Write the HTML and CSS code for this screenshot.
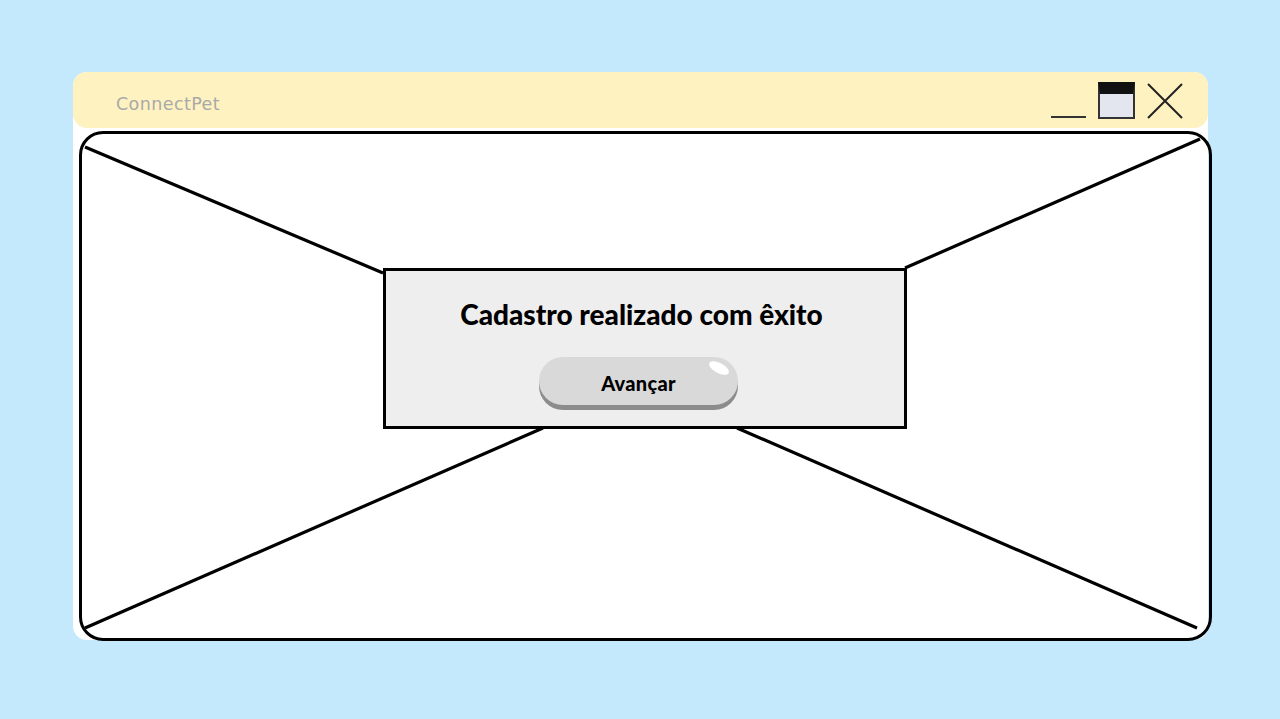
FILE: index.html
```html
<!DOCTYPE html>
<html lang="pt-BR">
<head>
    <meta charset="UTF-8">
    <meta name="viewport" content="width=device-width, initial-scale=1.0">
    <title>ConnectPet - Cadastro</title>
    <link rel="stylesheet" href="styles.css">
</head>
<body>

<div class="window">
    <div class="title-bar">
        <span class="app-name">ConnectPet</span>
        <div class="controls">
            <span class="ctrl-min"></span>
            <span class="ctrl-max"></span>
            <svg class="ctrl-close" width="36" height="36" viewBox="0 0 36 36">
                <path d="M1 1 L35 35 M35 1 L1 35" stroke="#222" stroke-width="2" fill="none"/>
            </svg>
        </div>
    </div>

    <div class="frame">
        <svg class="frame-lines" width="1127" height="504" viewBox="0 0 1127 504">
            <g stroke="#000" stroke-width="3.2" fill="none">
                <line x1="3" y1="13" x2="301" y2="139"/>
                <line x1="1118" y1="5" x2="823" y2="134"/>
                <line x1="3" y1="494" x2="461" y2="294"/>
                <line x1="1115" y1="494" x2="655" y2="294"/>
            </g>
        </svg>

        <div class="dialog">
            <h2>Cadastro realizado com êxito</h2>
            <button class="next-btn">Avançar</button>
        </div>
    </div>
</div>

</body>
</html>
```

FILE: styles.css
```css
body {
    margin: 0;
    padding: 0;
    background: #c4e8fc;
    font-family: Lato, "Open Sans", sans-serif;
    height: 719px;
    overflow: hidden;
}
.window {
    margin: 72px 0 0 73px;
    width: 1135px;
    height: 568px;
    background: white;
    border-radius: 14px;
}
.title-bar {
    height: 56px;
    background: #fef2c0;
    border-radius: 14px;
    display: flex;
    align-items: center;
    justify-content: space-between;
    padding: 0 25px 0 43px;
    box-sizing: border-box;
}
.app-name {
    margin-top: 8px;
    font-family: "DejaVu Sans", sans-serif;
    font-size: 17.5px;
    color: #a9a9a9;
    letter-spacing: 0.4px;
}
.controls {
    display: flex;
    align-items: flex-end;
    gap: 12px;
    height: 38px;
}
.ctrl-min {
    width: 35px;
    height: 2px;
    background: #333;
    margin-bottom: 1px;
}
.ctrl-max {
    width: 37px;
    height: 37px;
    box-sizing: border-box;
    border: 2px solid #333;
    border-top: 12px solid #111;
    background: #e4e6ef;
}
.ctrl-close {
    display: block;
}
.frame {
    position: relative;
    margin: 3px 0 0 6px;
    width: 1133px;
    height: 510px;
    box-sizing: border-box;
    border: 3.5px solid #000;
    border-radius: 24px;
    display: flex;
    justify-content: center;
    align-items: flex-start;
    padding-top: 133.5px;
}
.frame-lines {
    position: absolute;
    top: 0;
    left: 0;
}
.dialog {
    position: relative;
    flex-shrink: 0;
    margin-left: -2px;
    width: 524px;
    height: 161px;
    box-sizing: border-box;
    border: 3px solid #000;
    background: #eeeeee;
    display: flex;
    flex-direction: column;
    align-items: center;
    padding-top: 28px;
}
.dialog h2 {
    margin: 0;
    font-size: 28px;
    line-height: 30px;
    font-weight: 900;
    color: #000;
    padding-right: 6px;
}
.next-btn {
    position: relative;
    margin: 28px 12px 0 0;
    width: 199px;
    height: 48px;
    border: none;
    border-radius: 24px;
    background: #d9d9d9;
    box-shadow: 0 5px 0 #8c8c8c;
    font-family: Lato, sans-serif;
    font-size: 20px;
    letter-spacing: 0.3px;
    font-weight: 900;
    color: #000;
    padding-top: 5px;
    cursor: pointer;
}
.next-btn::after {
    content: "";
    position: absolute;
    right: 8px;
    top: 6px;
    width: 22px;
    height: 10px;
    border-radius: 50%;
    background: white;
    transform: rotate(28deg);
}
```
